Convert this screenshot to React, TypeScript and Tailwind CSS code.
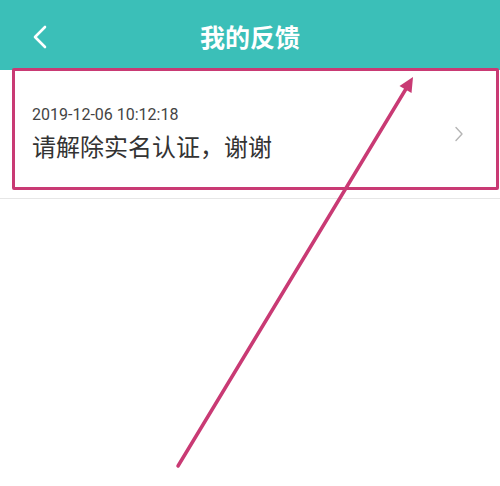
import React from "react";

export default function App() {
  return (
    <div className="relative w-[500px] h-[486px] bg-white overflow-hidden" style={{ fontFamily: '"Noto Sans CJK SC", Roboto, sans-serif' }}>
      <header className="relative h-[70px] bg-[#3bbfb8] flex items-center justify-center">
        <svg className="absolute left-[32px] top-[25px]" width="16" height="24" viewBox="0 0 16 24">
          <path d="M13 2 L3 12 L13 22" fill="none" stroke="white" strokeWidth="2.6" strokeLinecap="round" strokeLinejoin="round" />
        </svg>
        <h1 className="text-white text-[25px] font-bold leading-none mt-[2px]" style={{ fontFamily: '"Noto Sans CJK SC", sans-serif' }}>
          我的反馈
        </h1>
      </header>

      <div className="h-[129px] border-b border-[#e6e6e6] flex items-center pl-[32px] pr-[36px]">
        <div className="flex-1 flex flex-col gap-[6px] -mt-[2px]">
          <div className="text-[16px] leading-[20px] text-[#444]" style={{ fontFamily: 'Roboto, "Noto Sans CJK SC", sans-serif' }}>
            2019-12-06 10:12:18
          </div>
          <div className="text-[24px] leading-[30px] text-[#333]" style={{ fontFamily: '"Noto Sans CJK SC", sans-serif' }}>
            请解除实名认证，谢谢
          </div>
        </div>
        <svg width="10" height="16" viewBox="0 0 10 16" className="mb-[1px]">
          <path d="M2 1.5 L8 8 L2 14.5" fill="none" stroke="#b5b5b5" strokeWidth="1.4" strokeLinecap="round" strokeLinejoin="round" />
        </svg>
      </div>

      {/* annotation overlay */}
      <div className="absolute left-[12px] top-[68px] w-[487px] h-[122px] border-[3.5px] border-[#c93a74] rounded-[2px] pointer-events-none" />
      <svg className="absolute left-0 top-0 pointer-events-none" width="500" height="486" viewBox="0 0 500 486">
        <line x1="178" y1="466" x2="406.5" y2="88" stroke="#c93a74" strokeWidth="3.5" strokeLinecap="round" />
        <polygon points="413,77 411.5,93 399.5,86" fill="#c93a74" />
      </svg>
    </div>
  );
}
